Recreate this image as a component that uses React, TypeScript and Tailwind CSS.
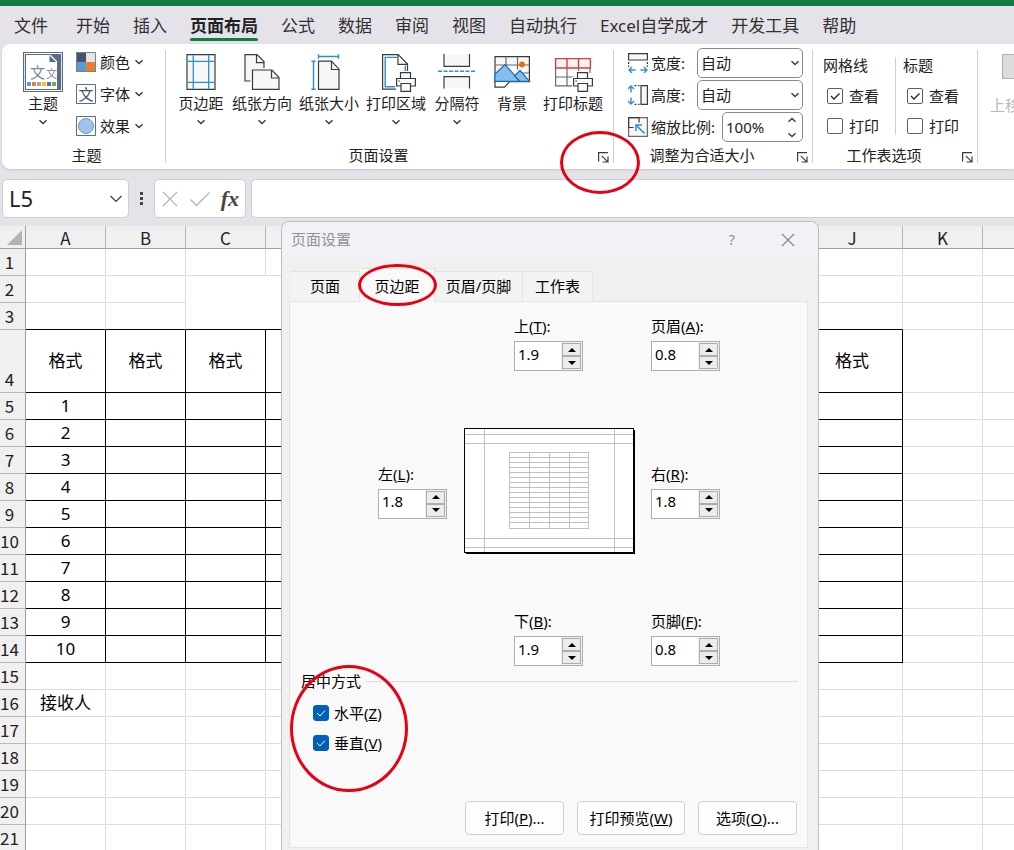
import React from "react";
import clsx from "clsx";

type IconProps = { children: React.ReactNode; size?: string; box?: string };

const Icon = ({ children, size = "size-10", box = "0 0 40 40" }: IconProps) => (
  <svg
    viewBox={box}
    className={clsx("shrink-0", size)}
    fill="none"
    stroke="#3b3b3b"
    strokeWidth={1.2}
    aria-hidden="true"
  >
    {children}
  </svg>
);

const Chevron = () => (
  <Icon size="h-[6px] w-[10px]" box="0 0 10 6">
    <path d="M1.5 1.2 5 4.5 8.5 1.2" strokeWidth={1.4} />
  </Icon>
);

const Printer = ({ x }: { x: number }) => (
  <g transform={`translate(${x} 20)`} fill="#fafafa">
    <path d="M4-1h11v6h5v11h-5v4H4v-4h-5V5h5z" fill="#fff" stroke="none" />
    <path d="M4.5 6.5V.6h10v5.9" />
    <path d="M.6 6.5h18.8v7.5H.6z" />
    <path d="M5 11.500h9.500v7.900H5z" />
    <path d="M2.5 9h1.500" />
  </g>
);

const ThemeIcon = () => (
  <Icon>
    <path d="M.5.5h39v39H.5z" fill="#fff" stroke="#5b6b86" />
    <path d="M2.5 2.5h35v35h-35z" fill="#5b6b86" stroke="#5b6b86" />
    <path d="M3 3h23.5v7H34v27H3z" fill="#fff" stroke="none" />
    <path d="m27 3 7 7" stroke="#fff" />
    <g fill="#7c8798" stroke="none" fontFamily="Noto Sans CJK SC">
      <text x="7" y="26" fontSize="15">文</text>
      <text x="23" y="26" fontSize="11">文</text>
    </g>
    <g stroke="none">
      <path d="M4 30h4v4H4z" fill="#5b9bd5" />
      <path d="M9 30h4v4H9z" fill="#ed7d31" />
      <path d="M14 30h4v4h-4z" fill="#a5a5a5" />
      <path d="M19 30h4v4h-4z" fill="#ffc000" />
      <path d="M24 30h4v4h-4z" fill="#4472c4" />
      <path d="M29 30h4v4h-4z" fill="#70ad47" />
    </g>
  </Icon>
);

const ColorsIcon = () => (
  <Icon size="size-5" box="0 0 20 20">
    <g stroke="none">
      <path d="M0 0h10v10H0z" fill="#44546a" />
      <path d="M10 0h10v10H10z" fill="#e7e6e6" />
      <path d="M0 10h10v10H0z" fill="#5b9bd5" />
      <path d="M10 10h10v10H10z" fill="#ed7d31" />
    </g>
    <path d="M.5.5h19v19H.5z" stroke="#7f7f7f" strokeWidth={1} />
  </Icon>
);

const FontsIcon = () => (
  <Icon size="size-5" box="0 0 20 20">
    <path d="M.5.5h19v19H.5z" fill="#fff" stroke="#5b6b86" strokeWidth={1} />
    <text x="2.5" y="15.5" fontSize="15" fill="#44546a" stroke="none" fontFamily="Noto Sans CJK SC">文</text>
  </Icon>
);

const EffectsIcon = () => (
  <Icon size="size-5" box="0 0 20 20">
    <path d="M.5.5h19v19H.5z" fill="#fff" stroke="#5b6b86" strokeWidth={1} />
    <circle cx="10" cy="10" r="7.5" fill="#a3c0e8" stroke="#5b9bd5" strokeWidth={1} />
  </Icon>
);

const MarginsIcon = () => (
  <Icon>
    <path d="M6 2.6h28v34.8H6z" fill="#f7f7f7" />
    <path d="M12.3 3.2v33.6M27.7 3.2v33.6M6.6 9.3h26.8M6.6 30.3h26.8" stroke="#2b8fd6" strokeWidth={1.3} />
  </Icon>
);

const OrientationIcon = () => (
  <Icon>
    <path d="M8.5 29H3V2.6h12l7 7V16" fill="#f7f7f7" />
    <path d="M14.5 2.6v8h7.5" />
    <path d="M10.5 37.4V18H30l7 7.5v11.9z" fill="#f7f7f7" />
    <path d="M29.5 18v8h7.5" />
  </Icon>
);

const SizeIcon = () => (
  <Icon>
    <path d="M9.5 37.4V9.2h13l7.5 8v20.2z" fill="#f7f7f7" />
    <path d="M22.5 9.2v8.3H30" />
    <path d="M9.5 4.5h20M9.5 2.2v4.6M29.5 2.2v4.6M4.5 9.2v28M2.4 9.2h4.2M2.4 37.3h4.2" stroke="#2b8fd6" strokeWidth={1.4} />
  </Icon>
);

const PrintAreaIcon = () => (
  <Icon>
    <path d="M6.6 2.6h15.4l9.5 9.5v25.3H6.6z" fill="#fff" stroke="none" />
    <path d="M20 37.2H6.6V2.6h15.6l9.3 9.4v8" />
    <path d="M19.5 34.8H9.2V5.4h12M29.3 14v6" stroke="#2b8fd6" strokeWidth={1.4} />
    <path d="M22 2.6v9.8h9.4" />
    <Printer x={20} />
  </Icon>
);

const BreaksIcon = () => (
  <Icon>
    <path d="M7 2v12.3h25.5V2M7 36.5V24.7h25.5v11.8" fill="#f7f7f7" />
    <path d="M1 19.3h38" stroke="#2b8fd6" strokeWidth={1.4} strokeDasharray="4 1.5" />
  </Icon>
);

const BackgroundIcon = () => (
  <Icon>
    <path d="M3 4.6h34.4v25H3z" fill="#f7f7f7" />
    <path d="M14 4.6v12M25.5 4.6v13M3 13h34.4M37 21H27M3 21h6" stroke="#6a6a6a" />
    <path d="M3 29v6.200h9.500l5-5.400" fill="#fff" />
    <circle cx="30" cy="12.500" r="2.900" fill="#e8710a" stroke="none" />
    <path d="M3 22 13 12.500 28 29.300H3z" fill="#83beec" stroke="#1a6fb8" />
    <path d="M22.500 24 28 18.500l9.500 10.800H28z" fill="#83beec" stroke="#1a6fb8" />
  </Icon>
);

const PrintTitlesIcon = () => (
  <Icon>
    <path d="M2.600 16v17.800h18M14 16v17.800M25.500 16v5M37 16v5M2.600 25h18" stroke="#6a6a6a" />
    <path d="M2.600 6.600H37.400V16H2.600zM14 6.600V16M25.500 6.600V16" fill="#fdf3f3" stroke="#e03c3c" strokeWidth={1.4} />
    <Printer x={20} />
  </Icon>
);

const WidthIcon = () => (
  <Icon size="size-5" box="0 0 20 20">
    <path d="M.6.600h18.800v6.400H.6z" fill="#f7f7f7" />
    <path d="M.6 9v5M19.400 9v5" strokeDasharray="2 1.500" />
    <path d="M1 17h6.500M12.500 17H19M4 14l-3 3 3 3M16 14l3 3-3 3" stroke="#2b8fd6" strokeWidth={1.4} />
  </Icon>
);

const HeightIcon = () => (
  <Icon size="size-5" box="0 0 20 20">
    <path d="M13 .6h6.400v18.800H13z" fill="#f7f7f7" />
    <path d="M6.500.600h5M6.500 19.400h5" strokeDasharray="2 1.500" />
    <path d="M3 1v6.500M3 12.500V19M0 4l3-3 3 3M0 16l3 3 3-3" stroke="#2b8fd6" strokeWidth={1.4} />
  </Icon>
);

const ScaleIcon = () => (
  <Icon size="size-5" box="0 0 20 20">
    <path d="M.6.600h18.800v18.800H.6z" fill="#f7f7f7" stroke="#6a6a6a" />
    <path d="M.6 10.500V.600h10.500v5M.6 10.500h5" />
    <path d="M16.500 16.500 8 8M8 14V8h6" stroke="#2b8fd6" strokeWidth={1.5} />
  </Icon>
);

const Launcher = ({ label }: { label: string }) => (
  <button aria-label={label} className="absolute right-1 top-2">
    <Icon size="size-[11px]" box="0 0 11 11">
      <path d="M.6 9.500V.600h9.400M3.800 3.800l6 6M10 4.500V10H4.500" />
    </Icon>
  </button>
);

const Divider = () => <div className="my-[6px] w-px shrink-0 bg-[#d0d0d0]" />;

type GroupProps = { title: string; className?: string; launcher?: boolean; children: React.ReactNode };

const Group = ({ title, className, launcher, children }: GroupProps) => (
  <section className={clsx("flex shrink-0 flex-col", className)}>
    <div className="flex h-[100px] items-start">{children}</div>
    <div className={clsx("relative text-center leading-[22px]", launcher ? "pr-[22px]" : "pl-[6px]")}>
      {title}
      {launcher && <Launcher label={`${title}…`} />}
    </div>
  </section>
);

type BigButtonProps = { label: string; icon: React.ReactNode; menu?: boolean };

const BigButton = ({ label, icon, menu = true }: BigButtonProps) => (
  <button className="flex min-w-12 shrink-0 flex-col items-center pt-2 whitespace-nowrap">
    {icon}
    <span className="leading-[22px]">{label}</span>
    {menu && <span className="pt-[5px]"><Chevron /></span>}
  </button>
);

const SmallButton = ({ label, icon }: { label: string; icon: React.ReactNode }) => (
  <button className="flex h-8 items-center gap-1 whitespace-nowrap">
    {icon}
    {label}
    <Chevron />
  </button>
);

const AutoSelect = ({ id, label, icon }: { id: string; label: string; icon: React.ReactNode }) => (
  <div className="flex h-8 items-center">
    {icon}
    <label htmlFor={id} className="ml-[3px] flex-1">{label}</label>
    <div className="relative">
      <select id={id} className="block h-[30px] w-[106px] appearance-none rounded-[5px] border border-[#8a8a8a] bg-white pl-[3px]">
        <option>自动</option>
      </select>
      <span className="pointer-events-none absolute right-[3px] top-3"><Chevron /></span>
    </div>
  </div>
);

const ViewCheck = ({ label, checked }: { label: string; checked?: boolean }) => (
  <label className="flex h-[30px] items-center gap-[6px]">
    <span className="inline-grid">
      <input
        type="checkbox"
        defaultChecked={checked}
        className="peer col-start-1 row-start-1 size-4 appearance-none rounded-[2px] border border-[#5f5f5f] bg-white"
      />
      <svg viewBox="0 0 16 16" fill="none" stroke="#222" strokeWidth={1.3} className="pointer-events-none col-start-1 row-start-1 hidden size-4 peer-checked:block">
        <path d="m4 8 3 3 5.500-5.500" />
      </svg>
    </span>
    {label}
  </label>
);

const Ribbon = () => (
  <div className="ml-0.5 flex h-[125px] shrink-0 overflow-hidden rounded-l-lg bg-white text-[15px] whitespace-nowrap text-[#222] shadow-sm">
    <Group title="主题" className="w-[163px]">
      <div className="pl-[17px]"><BigButton label="主题" icon={<ThemeIcon />} /></div>
      <div className="ml-[9px] pt-[2px]">
        <SmallButton label="颜色" icon={<ColorsIcon />} />
        <SmallButton label="字体" icon={<FontsIcon />} />
        <SmallButton label="效果" icon={<EffectsIcon />} />
      </div>
    </Group>
    <Divider />
    <Group title="页面设置" className="w-[447px]" launcher>
      <div className="flex gap-[7px] pl-[11px]">
        <BigButton label="页边距" icon={<MarginsIcon />} />
        <BigButton label="纸张方向" icon={<OrientationIcon />} />
        <BigButton label="纸张大小" icon={<SizeIcon />} />
        <BigButton label="打印区域" icon={<PrintAreaIcon />} />
        <BigButton label="分隔符" icon={<BreaksIcon />} />
        <BigButton label="背景" icon={<BackgroundIcon />} menu={false} />
        <BigButton label="打印标题" icon={<PrintTitlesIcon />} menu={false} />
      </div>
    </Group>
    <Divider />
    <Group title="调整为合适大小" className="w-[198px]" launcher>
      <div className="flex-1 pt-[3px] pr-[9px] pl-[14px]">
        <AutoSelect id="fit-width" label="宽度:" icon={<WidthIcon />} />
        <AutoSelect id="fit-height" label="高度:" icon={<HeightIcon />} />
        <div className="flex h-8 items-center">
          <ScaleIcon />
          <label htmlFor="scale" className="ml-[3px] flex-1">缩放比例:</label>
          <div className="flex h-[30px] w-[81px] items-center rounded-[5px] border border-[#8a8a8a] bg-white pr-[5px] pl-[3px]">
            <input id="scale" defaultValue="100%" className="w-full min-w-0 bg-transparent" />
            <span className="flex flex-col gap-[9px]">
              <button aria-label="增大" className="rotate-180"><Chevron /></button>
              <button aria-label="减小"><Chevron /></button>
            </span>
          </div>
        </div>
      </div>
    </Group>
    <Divider />
    <Group title="工作表选项" className="w-[164px]" launcher>
      <div className="w-[82px] pt-2 pl-[10px]">
        <div className="leading-[26px]">网格线</div>
        <div className="pt-[3px] pl-1">
          <ViewCheck label="查看" checked />
          <ViewCheck label="打印" />
        </div>
      </div>
      <div className="mt-[13px] h-[78px] w-px bg-[#d0d0d0]" />
      <div className="pt-2 pl-[7px]">
        <div className="leading-[26px]">标题</div>
        <div className="pt-[3px] pl-1">
          <ViewCheck label="查看" checked />
          <ViewCheck label="打印" />
        </div>
      </div>
    </Group>
    <Divider />
    <div className="shrink-0 pt-[2px] pl-3 text-[#b8b8b8]">
      <BigButton
        label="上移一层"
        menu={false}
        icon={
          <Icon>
            <path d="M2.500.500h35v24h-35z" fill="#dcdcdc" stroke="#b0b0b0" />
          </Icon>
        }
      />
    </div>
  </div>
);

const menuTabs = ["开始", "插入", "页面布局", "公式", "数据", "审阅", "视图", "自动执行", "Excel自学成才", "开发工具", "帮助"];

const MenuTabs = () => (
  <nav className="flex h-[38px] shrink-0 gap-[23px] pl-[14px] text-[17px] leading-[37px] whitespace-nowrap text-[#303030]">
    <button className="mr-[5px]">文件</button>
    {menuTabs.map((tab) => (
      <button
        key={tab}
        className={clsx("relative", tab === "页面布局" && "font-bold text-[#222] after:absolute after:inset-x-0 after:bottom-[3px] after:h-[3px] after:rounded-full after:bg-[#107c41]")}
      >
        {tab}
      </button>
    ))}
  </nav>
);

const FormulaBar = () => (
  <div className="flex h-[57px] shrink-0 items-start pt-[10px] pl-0.5">
    <div className="flex h-[39px] w-[127px] items-center rounded-[5px] border border-[#cfcdd2] bg-white pr-[5px] pl-[6px]">
      <input aria-label="名称框" defaultValue="L5" className="w-full min-w-0 text-[22px] text-[#222]" />
      <button aria-label="名称列表">
        <Icon size="h-2 w-[14px]" box="0 0 14 8"><path d="m1.500 1 5.500 5.500L12.500 1" /></Icon>
      </button>
    </div>
    <div className="flex h-[39px] w-[25px] flex-col items-center justify-center gap-[2px]">
      <i className="size-[3px] bg-[#444]" />
      <i className="size-[3px] bg-[#444]" />
      <i className="size-[3px] bg-[#444]" />
    </div>
    <div className="flex h-[39px] w-[92px] items-center justify-between rounded-[5px] border border-[#cfcdd2] bg-white px-[6px]">
      <button aria-label="取消">
        <Icon size="size-[18px]" box="0 0 18 18"><path d="m2 2 14 14M16 2 2 16" stroke="#b5b5b5" /></Icon>
      </button>
      <button aria-label="输入">
        <Icon size="h-[18px] w-[22px]" box="0 0 22 18"><path d="m1.500 9.500 6 6L20.500 2.500" stroke="#b5b5b5" strokeWidth={1.4} /></Icon>
      </button>
      <button className="font-['Liberation_Serif',serif] text-[22px] leading-7 font-bold text-[#444] italic">fx</button>
    </div>
    <input aria-label="编辑栏" className="ml-[5px] h-[39px] min-w-0 flex-1 rounded-l-[5px] border border-r-0 border-[#cfcdd2] bg-white px-2" />
  </div>
);

const columns = ["A", "B", "C", "D", "E", "F", "G", "H", "I", "J", "K", "L", "M", "N", "O", "P"];
const rows = Array.from({ length: 28 }, (_, i) => i + 1);

const cellText = (col: string, row: number) => {
  if (row === 4 && col <= "J") return "格式";
  if (col === "A" && row >= 5 && row <= 14) return row - 4;
  if (col === "A" && row === 16) return "接收人";
  return null;
};

const Cell = ({ col, row }: { col: string; row: number }) => {
  // C2:I3 is one merged cell
  const merged = col >= "C" && col <= "I" && (row === 2 || row === 3);
  if (merged && !(col === "C" && row === 2)) return null;
  const inTable = col <= "J";
  return (
    <td
      colSpan={merged ? 7 : 1}
      rowSpan={merged ? 2 : 1}
      className={clsx(
        "border-r border-b p-0 text-center",
        inTable && row >= 4 && row <= 14 ? "border-r-black" : "border-r-[#dcdcdc]",
        inTable && ((row >= 3 && row <= 14) || merged) ? "border-b-black" : "border-b-[#dcdcdc]",
      )}
    >
      {cellText(col, row)}
    </td>
  );
};

const Sheet = () => (
  <div className="min-h-0 flex-1 overflow-hidden bg-white">
    <table className="w-max border-separate border-spacing-0 text-[17px] leading-5 text-black">
      <colgroup>
        <col className="w-[26px]" />
        {columns.map((c) => (
          <col key={c} className={c === "D" ? "w-24" : c === "J" ? "w-[101px]" : c > "D" && c < "J" ? "w-[88px]" : "w-20"} />
        ))}
      </colgroup>
      <thead className="bg-[#f0f0f0] font-['Noto_Sans_CJK_SC',sans-serif] text-[#222]">
        <tr className="h-[23px]">
          <th className="border-r border-b border-[#a0a0a0] p-0">
            <svg viewBox="0 0 25 22" className="block h-[22px] w-[25px]">
              <path d="M22 4v15H7z" fill="#b3b3b3" />
            </svg>
          </th>
          {columns.map((c) => (
            <th key={c} className="border-r border-b border-r-[#b8b8b8] border-b-[#a0a0a0] p-0 pt-[2px] font-normal">{c}</th>
          ))}
        </tr>
      </thead>
      <tbody>
        {rows.map((r) => (
          <tr key={r} className={r === 4 ? "h-[63px]" : "h-[27px]"}>
            <th className="border-r border-b border-r-[#a0a0a0] border-b-[#b8b8b8] bg-[#f0f0f0] p-0 pr-[6px] pb-[3px] text-center align-bottom font-['Noto_Sans_CJK_SC',sans-serif] font-normal text-[#222]">
              {r}
            </th>
            {columns.map((c) => (
              <Cell key={c} col={c} row={r} />
            ))}
          </tr>
        ))}
      </tbody>
    </table>
  </div>
);

type SpinnerProps = { id: string; label: string; hotkey: string; value: string; className?: string };

const Spinner = ({ id, label, hotkey, value, className }: SpinnerProps) => (
  <div className={clsx("w-[69px]", className)}>
    <label htmlFor={id} className="block h-[25px] leading-5 whitespace-nowrap">
      {label}(<u>{hotkey}</u>):
    </label>
    <div className="flex h-[30px] border border-[#abadb3] bg-white">
      <input id={id} defaultValue={value} className="w-[46px] bg-white pb-1 pl-[3px]" />
      <div className="flex flex-1 flex-col bg-[#f0f0f0] p-px">
        <button aria-label="增大" className="flex flex-1 items-center justify-center border border-[#abadb3] bg-[#ececec]">
          <svg viewBox="0 0 8 4" className="h-1 w-2"><path d="M0 4h8L4 0z" /></svg>
        </button>
        <button aria-label="减小" className="flex flex-1 items-center justify-center border border-[#abadb3] bg-[#ececec]">
          <svg viewBox="0 0 8 4" className="h-1 w-2"><path d="M0 0h8L4 4z" /></svg>
        </button>
      </div>
    </div>
  </div>
);

const Preview = () => (
  <svg viewBox="0 0 171 126" className="h-[126px] w-[171px]" shapeRendering="crispEdges" fill="none" role="img" aria-label="预览">
    <path d="M2 2h169v124H2z" fill="#000" />
    <path d="M.5.500h169v124H.5z" fill="#fff" stroke="#000" />
    <path d="M20.500 1v123M150.500 1v123M1 6.500h168M1 15.500h168M1 110.500h168M1 119.500h168" stroke="#c0c0c0" />
    <path d="M45.500 24.500h79v76h-79zM65.500 24v76M85.500 24v76M105.500 24v76" stroke="#c0c0c0" />
    {Array.from({ length: 14 }, (_, i) => (
      <path key={i} d={`M45 ${29.5 + i * 5}h79`} stroke="#c0c0c0" />
    ))}
  </svg>
);

const CenterCheck = ({ label, hotkey }: { label: string; hotkey: string }) => (
  <label className="flex h-[30px] w-fit items-center gap-[5px]">
    <span className="inline-grid">
      <input type="checkbox" defaultChecked className="peer col-start-1 row-start-1 size-4 appearance-none rounded-[3px] border border-[#8a8a8a] checked:border-[#005fb8] checked:bg-[#005fb8]" />
      <svg viewBox="0 0 16 16" fill="none" stroke="#fff" className="pointer-events-none col-start-1 row-start-1 hidden size-4 peer-checked:block">
        <path d="m4 8 3 3 5-5.500" />
      </svg>
    </span>
    <span>{label}(<u>{hotkey}</u>)</span>
  </label>
);

const DialogButton = ({ label, hotkey, dots, className }: { label: string; hotkey: string; dots?: boolean; className?: string }) => (
  <button className={clsx("h-[34px] rounded-[4px] border border-[#d0d0d0] bg-[#fdfdfd]", className)}>
    {label}(<u>{hotkey}</u>){dots && "..."}
  </button>
);

const tabs = [
  { label: "页面", width: "w-[69px]" },
  { label: "页边距", width: "w-[75px]" },
  { label: "页眉/页脚", width: "w-[88px]" },
  { label: "工作表", width: "w-[70px]" },
];

const PageSetupDialog = () => (
  <div role="dialog" aria-label="页面设置" className="absolute top-[221px] left-[281px] w-[538px] rounded-t-lg border border-[#bdbdc0] bg-[#f0f0f0] pb-6 text-[15px] text-black">
    <div className="flex h-[37px] items-center rounded-t-lg bg-[#f3f1f7] pr-[23px] pb-[2px] pl-[9px] text-[#929292]">
      <h2 className="flex-1">页面设置</h2>
      <button aria-label="帮助" className="mr-[46px]">?</button>
      <button aria-label="关闭">
        <Icon size="size-[14px]" box="0 0 14 14"><path d="m1 1 12 12M13 1 1 13" stroke="#8a8a8a" /></Icon>
      </button>
    </div>
    <div role="tablist" className="mt-[9px] flex h-[33px] items-end pl-[9px]">
      {tabs.map((t) => (
        <button
          key={t.label}
          role="tab"
          aria-selected={t.label === "页边距"}
          className={clsx(
            "border-t border-r border-[#e4e4e4]",
            t.width,
            t.label === "页边距" ? "relative -mb-px h-[34px] bg-[#f9f9f9] pt-[2px]" : "h-[30px] bg-[#f3f3f3]",
          )}
        >
          {t.label}
        </button>
      ))}
    </div>
    <div className="mr-[10px] ml-[7px] border border-[#e4e4e4] bg-[#f9f9f9] pt-[14px] pb-3">
      <div className="ml-[88px] grid grid-cols-[86px_187px_69px] gap-y-[57px]">
        <Spinner id="top" label="上" hotkey="T" value="1.9" className="col-start-2 ml-[50px]" />
        <Spinner id="header" label="页眉" hotkey="A" value="0.8" />
        <Spinner id="left" label="左" hotkey="L" value="1.8" className="self-center" />
        <Preview />
        <Spinner id="right" label="右" hotkey="R" value="1.8" className="self-center" />
        <Spinner id="bottom" label="下" hotkey="B" value="1.9" className="col-start-2 ml-[50px]" />
        <Spinner id="footer" label="页脚" hotkey="F" value="0.8" />
      </div>
      <div role="group" aria-label="居中方式" className="mt-1 mr-[9px] ml-[11px]">
        <div className="flex items-center gap-[5px] leading-[22px]">
          居中方式
          <span className="h-px flex-1 bg-[#dcdcdc]" />
        </div>
        <div className="mt-[6px] ml-3">
          <CenterCheck label="水平" hotkey="Z" />
          <CenterCheck label="垂直" hotkey="V" />
        </div>
      </div>
      <div className="mt-[43px] mr-[10px] flex justify-end gap-[13px]">
        <DialogButton label="打印" hotkey="P" dots className="w-[99px]" />
        <DialogButton label="打印预览" hotkey="W" className="w-[108px]" />
        <DialogButton label="选项" hotkey="O" dots className="w-[99px]" />
      </div>
    </div>
  </div>
);

const App = () => {
  return (
    <div className="relative flex h-screen flex-col overflow-hidden bg-[#e5e2e9] font-['Noto_Sans','Noto_Sans_CJK_SC',sans-serif]">
      <div className="h-[6px] shrink-0 bg-[#107c41]" />
      <MenuTabs />
      <Ribbon />
      <FormulaBar />
      <Sheet />
      <PageSetupDialog />
      {/* red pen marks */}
      <div className="pointer-events-none absolute top-[131px] left-[560px] h-[63px] w-20 rounded-[50%] border-3 border-[#e60012]" />
      <div className="pointer-events-none absolute top-[264px] left-[358px] h-[42px] w-[79px] rounded-[50%] border-3 border-[#e60012]" />
      <div className="pointer-events-none absolute top-[665px] left-[290px] h-[127px] w-[118px] rounded-[50%] border-3 border-[#e60012]" />
    </div>
  );
};

export default App;
